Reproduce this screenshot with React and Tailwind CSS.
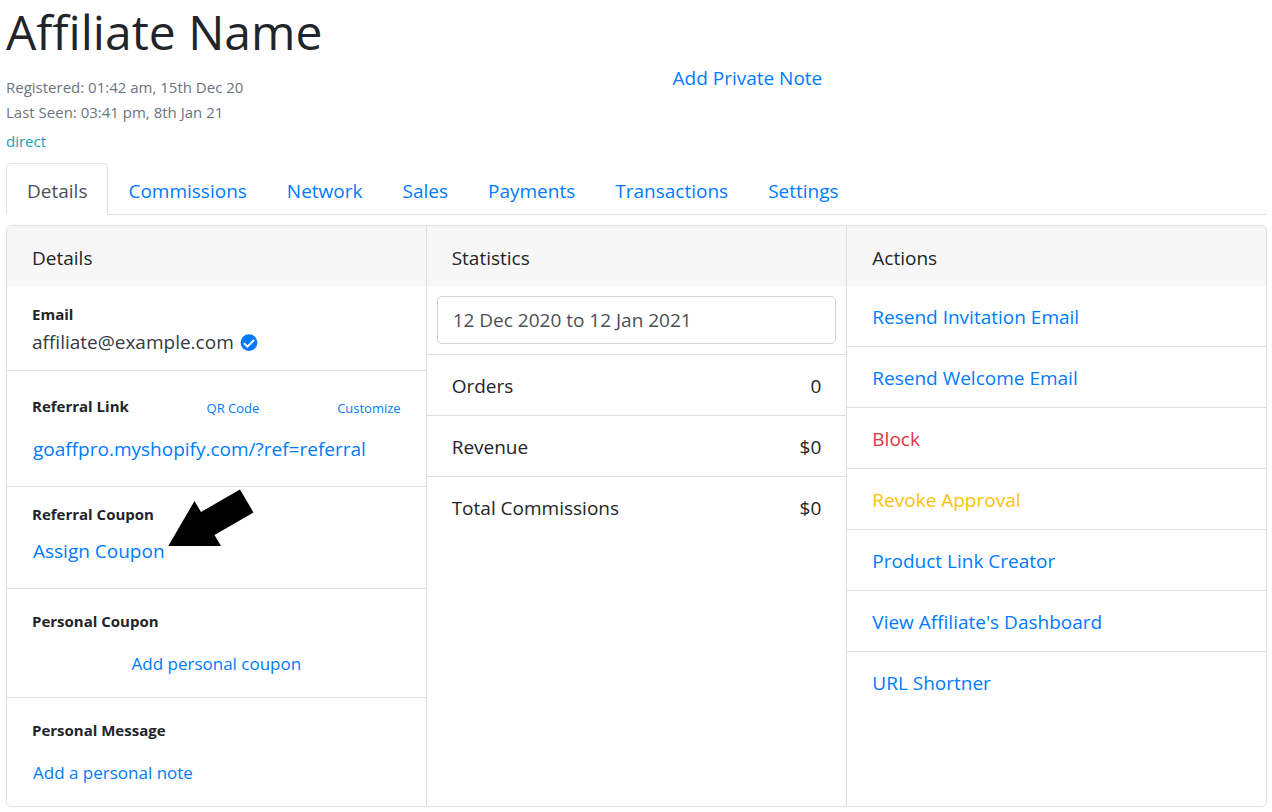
const tabs = ["Commissions", "Network", "Sales", "Payments", "Transactions", "Settings"];

const stats = [
  ["Orders", "0"],
  ["Revenue", "$0"],
  ["Total Commissions", "$0"],
];

const actions = [
  ["Resend Invitation Email", "text-[#007bff]"],
  ["Resend Welcome Email", "text-[#007bff]"],
  ["Block", "text-[#dc3545]"],
  ["Revoke Approval", "text-[#ffc107]"],
  ["Product Link Creator", "text-[#007bff]"],
  ["View Affiliate's Dashboard", "text-[#007bff]"],
  ["URL Shortner", "text-[#007bff]"],
];

function CardHeader({ children }) {
  return <h2 className="bg-[#f7f7f7] px-[25px] pt-[17px] pb-[13px] leading-[30px]">{children}</h2>;
}

function Label({ children }) {
  return <h3 className="text-[15px] leading-6 font-bold">{children}</h3>;
}

function VerifiedIcon() {
  return (
    <svg viewBox="0 0 18 18" className="h-[18px] w-[18px]" aria-hidden="true">
      <circle cx="9" cy="9.6" r="8.4" fill="#007bff" />
      <path d="M3.9 10.1 7.4 13.6 14.1 6.9" fill="none" stroke="#fff" strokeWidth="2" />
    </svg>
  );
}

function Arrow() {
  return (
    <svg viewBox="0 0 86 58" className="absolute top-[2px] left-[161px] h-[58px] w-[86px]" aria-hidden="true">
      <path d="M.3 57 26.5 12 33 23 72 .5 85.5 23.5 46.5 46 53 57Z" fill="#000" />
    </svg>
  );
}

export default function App() {
  return (
    <main className="bg-white pr-[5px] pb-[5px] pl-[6px] font-['Open_Sans',sans-serif] text-[19px] text-[#212529]">
      <header className="grid grid-cols-2">
        <div>
          <h1 className="pt-[2px] text-[48px] leading-[60px]">Affiliate Name</h1>
          <p className="pt-[13px] text-[15px] leading-[25px] text-[#6c757d]">
            Registered: 01:42 am, 15th Dec 20
            <br />
            Last Seen: 03:41 pm, 8th Jan 21
          </p>
          <p className="pt-1 pb-[9px] text-[15px] leading-[25px] text-[#17a2b8]">direct</p>
        </div>
        <div className="pt-[63px] pl-9">
          <button className="leading-[30px] text-[#007bff]">Add Private Note</button>
        </div>
      </header>

      <nav className="flex border-b border-[#dee2e6] leading-[30px]">
        <a href="#details" className="-mb-px rounded-t-[5px] border border-b-white border-[#dee2e6] px-5 pt-3 pb-2 text-[#495057]">
          Details
        </a>
        {tabs.map((tab) => (
          <a key={tab} href={"#" + tab.toLowerCase()} className="border border-transparent px-[19px] pt-3 pb-[7px] text-[#007bff]">
            {tab}
          </a>
        ))}
      </nav>

      <div className="mt-[10px] grid grid-cols-3 overflow-hidden rounded-[5px] border border-[#dfdfdf]">
        <section className="border-r border-[#dfdfdf]">
          <CardHeader>Details</CardHeader>
          <div className="border-b border-[#dfdfdf] px-[25px] pt-4 pb-[13px]">
            <Label>Email</Label>
            <p className="flex items-center gap-1.5 pt-[1px] leading-[30px] text-[#343a40]">
              affiliate@example.com
              <VerifiedIcon />
            </p>
          </div>
          <div className="border-b border-[#dfdfdf] px-[25px] pt-[23px] pb-[22px]">
            <div className="flex items-end justify-between">
              <Label>Referral Link</Label>
              <button className="text-[13px] leading-5 text-[#007bff]">QR Code</button>
              <button className="text-[13px] leading-5 text-[#007bff]">Customize</button>
            </div>
            <a href="#referral" className="block pt-4 pl-[1px] leading-[30px] text-[#007bff]">
              goaffpro.myshopify.com/?ref=referral
            </a>
          </div>
          <div className="relative border-b border-[#dfdfdf] px-[25px] pt-[15px] pb-[22px]">
            <Label>Referral Coupon</Label>
            <button className="mt-[10px] block pl-[1px] leading-[30px] text-[#007bff]">Assign Coupon</button>
            <Arrow />
          </div>
          <div className="border-b border-[#dfdfdf] px-[25px] pt-5 pb-[18px]">
            <Label>Personal Coupon</Label>
            <button className="mx-auto mt-4 block text-[17px] leading-[30px] text-[#007bff]">Add personal coupon</button>
          </div>
          <div className="px-[25px] pt-5 pb-[18px]">
            <Label>Personal Message</Label>
            <button className="mt-4 block pl-[1px] text-[17px] leading-[30px] text-[#007bff]">Add a personal note</button>
          </div>
        </section>

        <section>
          <CardHeader>Statistics</CardHeader>
          <div className="border-b border-[#dfdfdf] p-[10px]">
            <input
              aria-label="Date range"
              defaultValue="12 Dec 2020 to 12 Jan 2021"
              className="block h-12 w-full rounded-[5px] border border-[#ced4da] px-[15px] text-[#495057]"
            />
          </div>
          <dl>
            {stats.map(([name, value]) => (
              <div key={name} className="flex justify-between border-b border-[#dfdfdf] px-[25px] pt-4 pb-[14px] leading-[30px] last:border-b-0">
                <dt>{name}</dt>
                <dd>{value}</dd>
              </div>
            ))}
          </dl>
        </section>

        <section className="border-l border-[#dfdfdf]">
          <CardHeader>Actions</CardHeader>
          <ul>
            {actions.map(([name, color]) => (
              <li key={name} className="border-b border-[#dfdfdf] px-[25px] pt-4 pb-[14px] leading-[30px] last:border-b-0">
                <button className={color}>{name}</button>
              </li>
            ))}
          </ul>
        </section>
      </div>
    </main>
  );
}
